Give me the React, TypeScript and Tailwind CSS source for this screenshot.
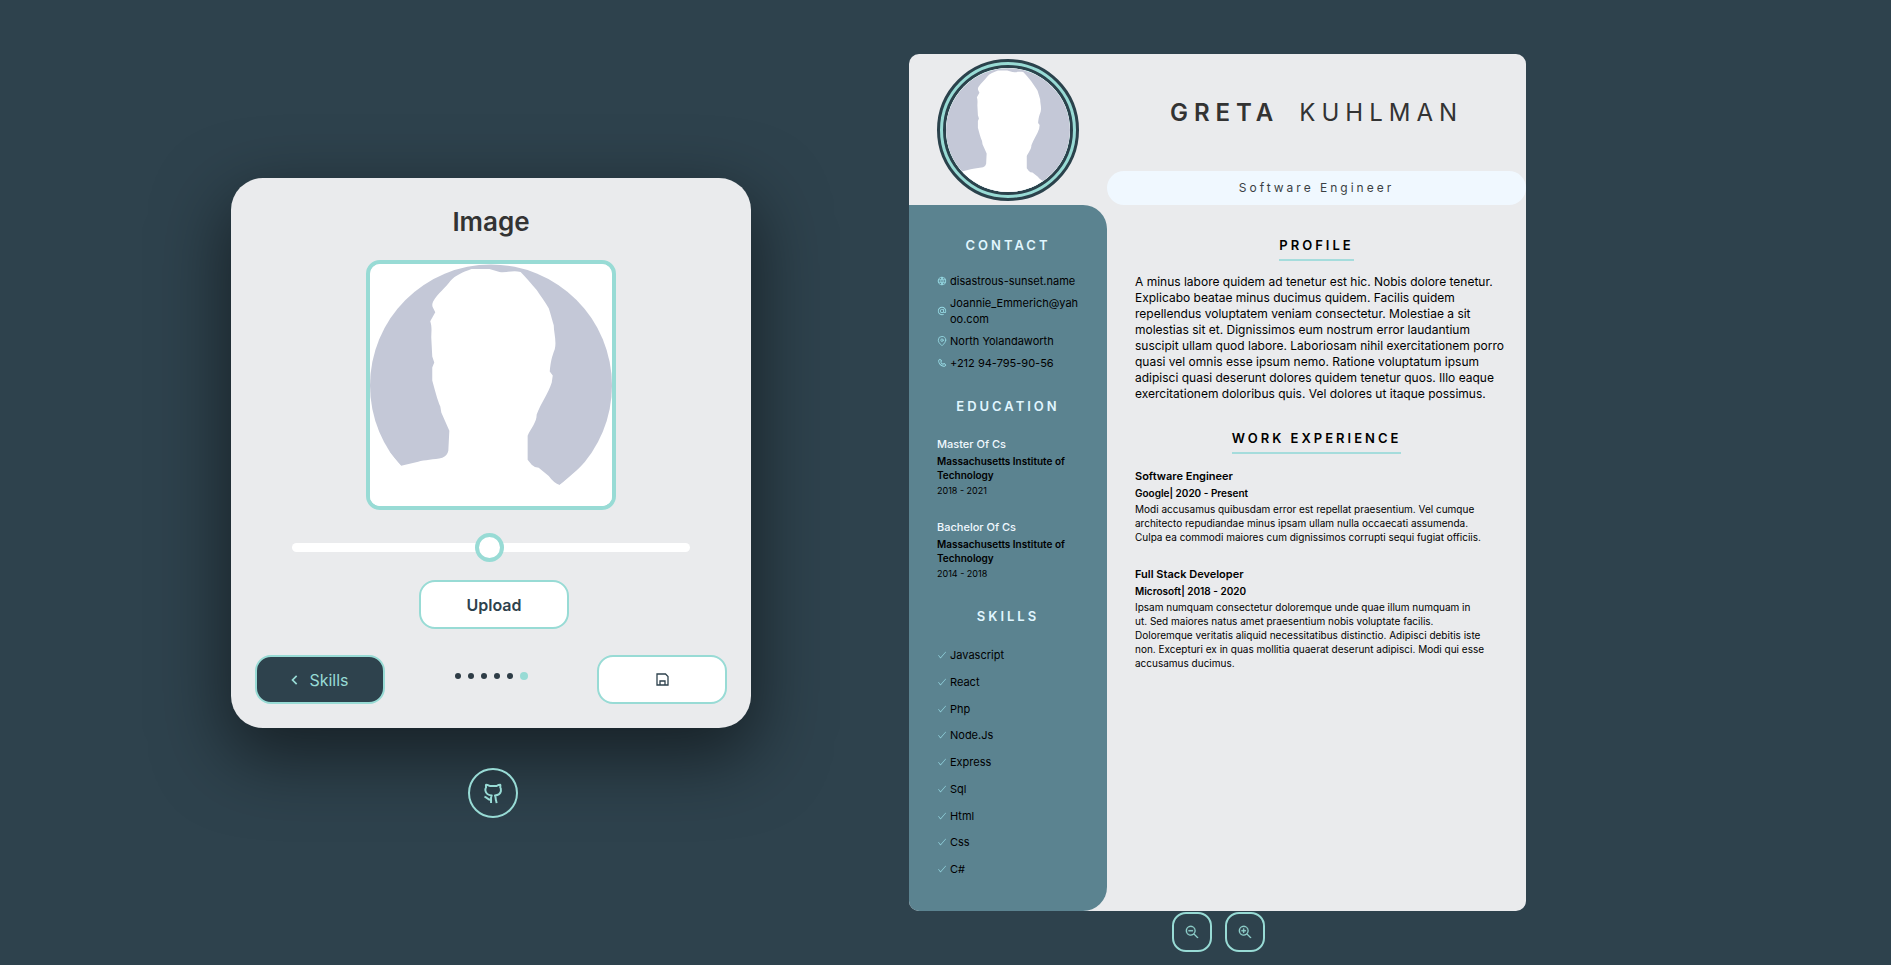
import React from 'react';
import { VscCheck, VscZoomIn, VscZoomOut } from 'react-icons/vsc';
import { BiAt, BiChevronLeft, BiPhone } from 'react-icons/bi';
import { FiMapPin } from 'react-icons/fi';
import { TbWorld } from 'react-icons/tb';

const skills = ['Javascript', 'React', 'Php', 'Node.Js', 'Express', 'Sql', 'Html', 'Css', 'C#'];

const education = [
  { degree: 'Master Of Cs', school: 'Massachusetts Institute of Technology', years: '2018 - 2021' },
  { degree: 'Bachelor Of Cs', school: 'Massachusetts Institute of Technology', years: '2014 - 2018' },
];

const contacts = [
  { icon: TbWorld, text: 'disastrous-sunset.name' },
  { icon: BiAt, text: 'Joannie_Emmerich@yahoo.com' },
  { icon: FiMapPin, text: 'North Yolandaworth' },
  { icon: BiPhone, text: '+212 94-795-90-56' },
];

const jobs = [
  {
    title: 'Software Engineer',
    where: 'Google| 2020 - Present',
    text: 'Modi accusamus quibusdam error est repellat praesentium. Vel cumque architecto repudiandae minus ipsam ullam nulla occaecati assumenda. Culpa ea commodi maiores cum dignissimos corrupti sequi fugiat officiis.',
  },
  {
    title: 'Full Stack Developer',
    where: 'Microsoft| 2018 - 2020',
    text: 'Ipsam numquam consectetur doloremque unde quae illum numquam in\nut. Sed maiores natus amet praesentium nobis voluptate facilis. Doloremque veritatis aliquid necessitatibus distinctio. Adipisci debitis iste non. Excepturi ex in quas mollitia quaerat deserunt adipisci. Modi qui esse accusamus ducimus.',
  },
];

function Portrait() {
  return (
    <svg viewBox="0 0 241 241" className="block size-full bg-white" role="img" aria-label="Profile picture">
      <circle cx="120.5" cy="121" r="120.5" fill="#c4c8d7" />
      <path
        fill="#fff"
        d="M101 5 C93 8 85 11 80 17 C75 24 68 29 63 37 Q61 41 63 44 L65 48 L60 57 C62 63 61 68 61 73 L62 92 L64 98 L62 103 L62 116 C65 127 67 135 70 142 L71 148 L79 166 L78 186 Q77 191 72 193 C64 195 54 195 48 197 L31 201 L0 165 V241 H241 V175 L189 220 Q183 218 178 211 L168 203 Q164 203 161 200 L157 195 V171 C160 164 166 158 166 150 C170 139 178 128 181 118 L182 111 L179 107 C180 97 181 93 184 85 C186 77 183 68 183 61 C181 54 180 50 178 44 C174 37 170 32 166 26 C160 19 155 13 150 8 C142 6 136 9 129 8 L119 5 Z"
      />
    </svg>
  );
}

function GithubIcon() {
  return (
    <svg viewBox="54 52 60 64" className="h-[21px] w-5" fill="none" stroke="currentColor" strokeWidth="6" strokeLinejoin="round" aria-hidden="true">
      <path d="M78 113 V98 C78 94 79 92 80 90 C69 89 63 85 61 76 C60 71 61 68 63 65 C62 62 62 60 63 57 C67 57 70 59 74 61 H95 C98 59 102 57 106 57 C107 60 107 62 106 65 C109 69 108 73 108 77 C106 86 100 89 90 90 C91 92 92 94 92 98 C92 103 94 106 95 113" />
      <path d="M78 103 C68 104 68 96 58 94" />
    </svg>
  );
}

function SaveIcon() {
  return (
    <svg viewBox="0 0 13 13" className="size-[13px]" fill="none" stroke="currentColor" strokeWidth="1.3" aria-hidden="true">
      <path d="M1 1 H9.5 L12 3.5 V12 H1 Z M4 12 V8 H9 V12" />
    </svg>
  );
}

function SideTitle({ children }: { children: React.ReactNode }) {
  return <h2 className="text-center text-[13px]/5 font-semibold tracking-[3px] text-[#e0f6ff] uppercase">{children}</h2>;
}

function MainTitle({ children }: { children: React.ReactNode }) {
  return (
    <h2 className="mx-auto w-fit border-b-2 border-[#a5dcdc] pb-1 text-[13px]/5 font-semibold tracking-[3px] text-black uppercase">
      {children}
    </h2>
  );
}

function Editor() {
  return (
    <div className="flex flex-col items-center pt-[178px]">
      <form className="flex w-full flex-col items-center rounded-[32px] bg-[#eaebed] px-6 pt-7 pb-6 shadow-[0_25px_70px_5px_rgba(0,0,0,0.5)]">
        <h1 className="text-[26px]/8 font-semibold text-[#333333]">Image</h1>
        <div className="mt-[22px] size-[250px] overflow-hidden rounded-[14px] border-4 border-[#98dbd5]">
          <Portrait />
        </div>
        <input
          type="range"
          aria-label="Image size"
          min={0}
          max={200}
          defaultValue={99}
          className="mt-[33px] h-[9px] w-[398px] appearance-none rounded-full bg-white [&::-webkit-slider-thumb]:size-[29px] [&::-webkit-slider-thumb]:appearance-none [&::-webkit-slider-thumb]:rounded-full [&::-webkit-slider-thumb]:border-4 [&::-webkit-slider-thumb]:border-solid [&::-webkit-slider-thumb]:border-[#98dbd5] [&::-webkit-slider-thumb]:bg-white"
        />
        <button type="button" className="mt-7 ml-1.5 h-[49px] w-[150px] rounded-2xl border-2 border-[#98dbd5] bg-white text-base font-semibold text-[#2e424d]">
          Upload
        </button>
        <div className="mt-[26px] flex w-full items-center justify-between">
          <button type="button" className="flex h-[49px] w-[130px] items-center justify-center gap-1 rounded-2xl border-2 border-[#98dbd5] bg-[#2e424d] pr-1.5 text-base text-[#98dbd5]">
            <BiChevronLeft className="size-5" />
            Skills
          </button>
          <div className="mb-2 flex items-center gap-[7px]">
            {[0, 1, 2, 3, 4].map((dot) => (
              <span key={dot} className="size-[6px] rounded-full bg-[#2e3c46]" />
            ))}
            <span className="size-2 rounded-full bg-[#98dbd5]" />
          </div>
          <button type="button" aria-label="Save" className="flex h-[49px] w-[130px] items-center justify-center rounded-2xl border-2 border-[#98dbd5] bg-white text-[#2e424d]">
            <SaveIcon />
          </button>
        </div>
      </form>
      <a href="#github" aria-label="GitHub" className="mt-10 ml-1 flex size-[50px] items-center justify-center rounded-full border-2 border-[#98dbd5] text-[#98dbd5]">
        <GithubIcon />
      </a>
    </div>
  );
}

function Resume() {
  return (
    <div className="flex flex-col items-center pt-[54px]">
      <article className="grid min-h-[857px] w-full grid-cols-[198px_1fr] grid-rows-[151px_1fr] overflow-hidden rounded-[10px] bg-[#eaebed]">
        <div className="flex items-center justify-center">
          <div className="size-[142px] rounded-full border-3 border-[#2b424c] bg-[#98dbd5] p-[3px]">
            <div className="size-full overflow-hidden rounded-full border-3 border-[#2b424c]">
              <Portrait />
            </div>
          </div>
        </div>
        <header className="flex flex-col text-center">
          <div className="flex flex-1 items-center justify-center gap-5 text-2xl tracking-[6px] text-[#333333] uppercase">
            <span className="font-semibold">Greta</span>
            <span>Kuhlman</span>
          </div>
          <p className="h-[34px] rounded-full bg-[#f0f8ff] text-xs/[34px] tracking-[3px] text-[#3a3f44]">Software Engineer</p>
        </header>

        <aside className="flex flex-col rounded-r-3xl bg-[#5b8390] px-7 pt-[30px] pb-[34px] text-black">
          <SideTitle>Contact</SideTitle>
          <ul className="mt-[18px] flex flex-col gap-[6px] text-[11px]/4">
            {contacts.map(({ icon: Icon, text }) => (
              <li key={text} className="flex items-center gap-[3px] break-all">
                <Icon className="size-[10px] shrink-0 text-[#98dbe5]" />
                <span>{text}</span>
              </li>
            ))}
          </ul>
          <div className="mt-[25px]">
            <SideTitle>Education</SideTitle>
          </div>
          <div className="mt-[18px] flex flex-col gap-[18px]">
            {education.map((item) => (
              <div key={item.degree}>
                <h3 className="text-[11px]/5 font-medium text-[#f0f8ff]">{item.degree}</h3>
                <p className="text-[10px]/[14px] font-semibold">{item.school}</p>
                <p className="text-[9px]/[17px]">{item.years}</p>
              </div>
            ))}
          </div>
          <div className="mt-6">
            <SideTitle>Skills</SideTitle>
          </div>
          <ul className="mt-[21px] flex flex-1 flex-col justify-between text-[11px]/4">
            {skills.map((skill) => (
              <li key={skill} className="flex items-center gap-[3px]">
                <VscCheck className="size-[10px] text-[#98dbe5]" />
                {skill}
              </li>
            ))}
          </ul>
        </aside>

        <section className="pt-[30px] text-black">
          <MainTitle>Profile</MainTitle>
          <p className="mt-[13px] pr-4 pl-7 text-xs/4">
            A minus labore quidem ad tenetur est hic. Nobis dolore tenetur. Explicabo beatae minus ducimus quidem. Facilis quidem
            repellendus voluptatem veniam consectetur. Molestiae a sit molestias sit et. Dignissimos eum nostrum error laudantium
            suscipit ullam quod labore. Laboriosam nihil exercitationem porro quasi vel omnis esse ipsum nemo. Ratione voluptatum
            ipsum adipisci quasi deserunt dolores quidem tenetur quos. Illo eaque exercitationem doloribus quis. Vel dolores ut
            itaque possimus.
          </p>
          <div className="mt-[26px]">
            <MainTitle>Work Experience</MainTitle>
          </div>
          <div className="mt-[13px] flex flex-col gap-[21px] pr-9 pl-7">
            {jobs.map((job) => (
              <div key={job.title}>
                <h3 className="text-[11px]/[18px] font-semibold">{job.title}</h3>
                <p className="text-[10px]/[17px] font-semibold">{job.where}</p>
                <p className="text-[10px]/[14px] whitespace-pre-line">{job.text}</p>
              </div>
            ))}
          </div>
        </section>
      </article>
      <div className="mt-px ml-0.5 flex gap-[13px] text-[#98dbd5]">
        <button type="button" aria-label="Zoom out" className="flex size-10 items-center justify-center rounded-[14px] border-2 border-[#98dbd5]">
          <VscZoomOut className="size-[14px]" stroke="currentColor" strokeWidth="0.4" />
        </button>
        <button type="button" aria-label="Zoom in" className="flex size-10 items-center justify-center rounded-[14px] border-2 border-[#98dbd5]">
          <VscZoomIn className="size-[14px]" stroke="currentColor" strokeWidth="0.4" />
        </button>
      </div>
    </div>
  );
}

export default function App() {
  return (
    <main className="grid min-h-screen grid-cols-[231fr_520fr_158fr_617fr_365fr] bg-[#2e424d] font-['Inter',sans-serif]">
      <div className="col-start-2">
        <Editor />
      </div>
      <div className="col-start-4">
        <Resume />
      </div>
    </main>
  );
}
